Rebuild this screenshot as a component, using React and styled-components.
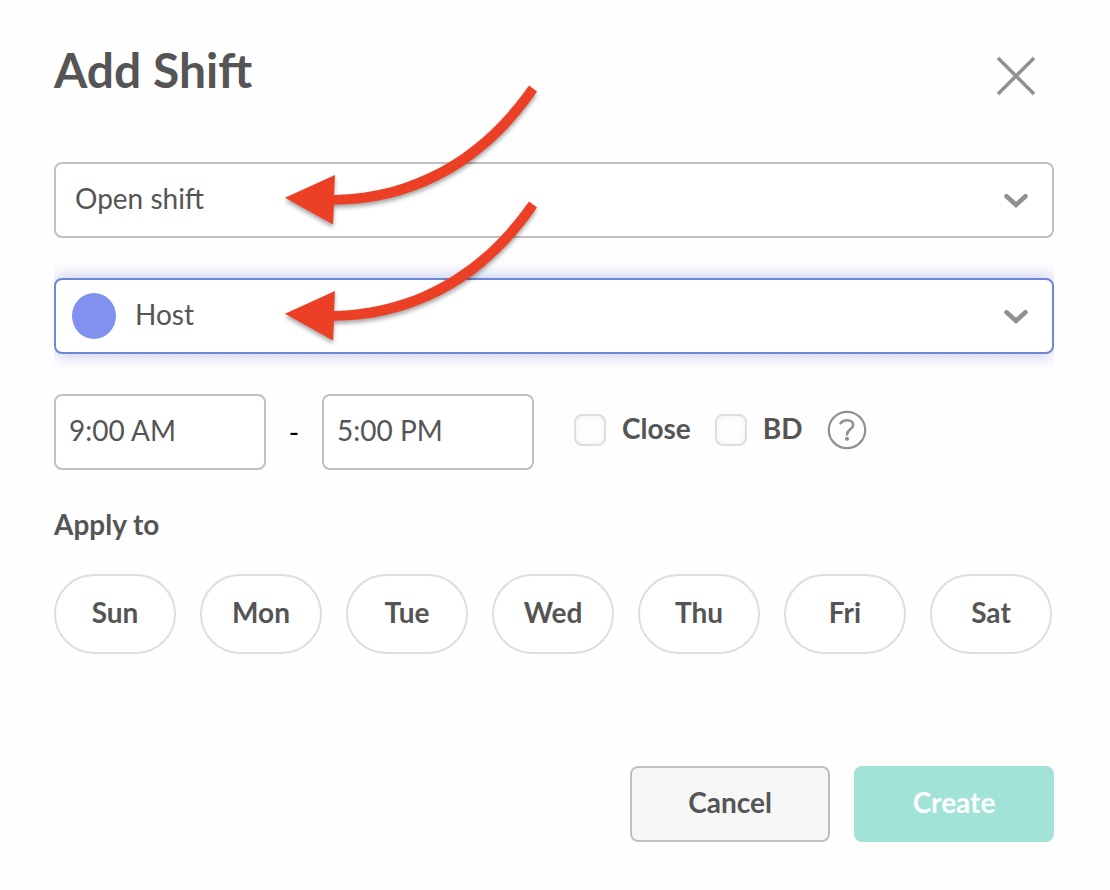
import React, { useState } from 'react';
import styled, { createGlobalStyle, css } from 'styled-components';

const days = ['Sun', 'Mon', 'Tue', 'Wed', 'Thu', 'Fri', 'Sat'];

const Chevron = () => (
    <ChevronIcon viewBox="0 0 24 16" aria-hidden="true">
        <path d="M2.5 4.2 L12 12.8 L21.5 4.2" />
    </ChevronIcon>
);

const Arrow = () => (
    <ArrowIcon viewBox="0 0 270 160" aria-hidden="true">
        <path
            d="M61 111 C150 109 214 62 256 1.5 L264 7.5 C220 72 152 120.5 61 120.7 L60 140.5 L12 113.7 L62 91 Z"
            fill="#eb4026"
        />
    </ArrowIcon>
);

const App = () => {
    const [selectedDays, setSelectedDays] = useState([]);

    const toggleDay = (day) => {
        setSelectedDays((current) =>
            current.includes(day) ? current.filter((d) => d !== day) : [...current, day]
        );
    };

    return (
        <>
            <GlobalStyle />
            <Dialog role="dialog" aria-labelledby="dialog-title">
                <Header>
                    <Title id="dialog-title">Add Shift</Title>
                    <CloseButton type="button" aria-label="Close dialog">
                        <svg width="40" height="40" viewBox="0 0 40 40">
                            <path d="M2 2 L38 38 M38 2 L2 38" stroke="#919191" strokeWidth="3.4" />
                        </svg>
                    </CloseButton>
                </Header>

                <Form onSubmit={(e) => e.preventDefault()}>
                    <Field>
                        <Select aria-label="Employee" defaultValue="open">
                            <option value="open">Open shift</option>
                        </Select>
                        <Chevron />
                        <Arrow />
                    </Field>

                    <Field>
                        <Select aria-label="Role" defaultValue="host" $active $withDot>
                            <option value="host">Host</option>
                        </Select>
                        <RoleDot />
                        <Chevron />
                        <Arrow />
                    </Field>

                    <TimeRow>
                        <TimeInput aria-label="Start time" defaultValue="9:00 AM" />
                        <Dash>-</Dash>
                        <TimeInput aria-label="End time" defaultValue="5:00 PM" />
                        <Options>
                            <CheckLabel>
                                <Checkbox type="checkbox" />
                                <span>Close</span>
                            </CheckLabel>
                            <CheckLabel>
                                <Checkbox type="checkbox" />
                                <span>BD</span>
                            </CheckLabel>
                            <HelpButton type="button" aria-label="Help">
                                <svg width="40" height="40" viewBox="0 0 40 40" fill="none" stroke="#919191">
                                    <circle cx="20" cy="20" r="18.2" strokeWidth="2.2" />
                                    <path
                                        d="M13.6 13.2 C15.4 11.2 17.6 10.3 20.2 10.3 C23.8 10.3 26.2 12.2 26.2 15 C26.2 19.2 20 19.3 20 24.4"
                                        strokeWidth="2.6"
                                        strokeLinecap="round"
                                    />
                                    <circle cx="20" cy="28.8" r="2.1" fill="#919191" stroke="none" />
                                </svg>
                            </HelpButton>
                        </Options>
                    </TimeRow>

                    <Days>
                        <Legend>Apply to</Legend>
                        <DayList>
                            {days.map((day) => (
                                <DayButton
                                    key={day}
                                    type="button"
                                    aria-pressed={selectedDays.includes(day)}
                                    $selected={selectedDays.includes(day)}
                                    onClick={() => toggleDay(day)}
                                >
                                    {day}
                                </DayButton>
                            ))}
                        </DayList>
                    </Days>

                    <Footer>
                        <Button type="button">Cancel</Button>
                        <Button type="submit" $primary>Create</Button>
                    </Footer>
                </Form>
            </Dialog>
        </>
    );
};

const GlobalStyle = createGlobalStyle`
  * {
    box-sizing: border-box;
  }

  body {
    margin: 0;
    background: #fefefe;
    color: #555;
    font-family: Lato, 'Open Sans', sans-serif;
    font-size: 28px;
    line-height: 32px;
  }

  button, input, select {
    margin: 0;
    font: inherit;
    color: inherit;
  }

  button {
    cursor: pointer;
  }
`;

const controlBox = css`
  height: 76px;
  border: 2px solid #c0c0c0;
  border-radius: 8px;
  background: #fff;
`;

const Dialog = styled.main`
  padding: 42px 56px 48px 54px;
`;

const Header = styled.header`
  display: flex;
  align-items: flex-end;
  justify-content: space-between;
  padding-right: 18px;
  margin-bottom: 64px;
`;

const Title = styled.h1`
  margin: 0;
  font-size: 48px;
  line-height: 56px;
  font-weight: 700;
`;

const CloseButton = styled.button`
  display: flex;
  align-items: center;
  height: 44px;
  padding: 0;
  border: 0;
  background: none;
`;

const Form = styled.form`
  display: flex;
  flex-direction: column;
  gap: 40px;
`;

const Field = styled.div`
  position: relative;
  display: grid;
  align-items: center;

  > * {
    grid-area: 1 / 1;
  }
`;

const Select = styled.select`
  ${controlBox}
  width: 100%;
  appearance: none;
  outline: none;
  padding: 0 64px 4px ${props => (props.$withDot ? '79px' : '19px')};

  ${props => props.$active && css`
    border-color: #6f86d6;
    box-shadow: 0 0 18px rgba(80, 100, 210, 0.4);
    clip-path: inset(-24px 0);
  `}
`;

const RoleDot = styled.span`
  z-index: 1;
  width: 44px;
  height: 46px;
  margin-left: 18px;
  border-radius: 50%;
  background: #8091f0;
  pointer-events: none;
`;

const ChevronIcon = styled.svg`
  z-index: 1;
  justify-self: end;
  width: 24px;
  height: 16px;
  margin-right: 26px;
  fill: none;
  stroke: #919191;
  stroke-width: 4.6;
  stroke-linecap: round;
  pointer-events: none;
`;

/* Annotation lying over the field and the space above it */
const ArrowIcon = styled.svg`
  position: absolute;
  left: 219px;
  bottom: -6px;
  z-index: 2;
  width: 270px;
  height: 160px;
  pointer-events: none;
  filter: drop-shadow(0 3px 2px rgba(0, 0, 0, 0.35));
`;

const TimeRow = styled.div`
  display: flex;
  align-items: center;
`;

const TimeInput = styled.input`
  ${controlBox}
  width: 212px;
  padding: 0 13px 4px;
`;

const Dash = styled.span`
  width: 56px;
  color: #000;
  text-align: center;
`;

const Options = styled.div`
  display: flex;
  align-items: center;
  gap: 24px;
  margin-left: 40px;
  padding-bottom: 4px;
`;

const CheckLabel = styled.label`
  display: flex;
  align-items: center;
  gap: 16px;
  font-weight: 700;

  span {
    padding-bottom: 4px;
  }
`;

const Checkbox = styled.input`
  appearance: none;
  width: 32px;
  height: 32px;
  border: 2px solid #dedede;
  border-radius: 8px;
  background: #fefefe;
  box-shadow: inset 0 0 6px rgba(0, 0, 0, 0.06);

  &:checked {
    background: #6f86d6;
  }
`;

const HelpButton = styled.button`
  display: flex;
  padding: 0;
  border: 0;
  background: none;
`;

const Days = styled.section`
  display: flex;
  flex-direction: column;
  gap: 36px;
`;

const Legend = styled.h2`
  margin: 0;
  font-size: 28px;
  line-height: 28px;
  font-weight: 700;
`;

const DayList = styled.div`
  display: grid;
  grid-template-columns: repeat(7, 1fr);
  gap: 24px;
  padding-right: 2px;
`;

const DayButton = styled.button`
  height: 80px;
  padding: 0 0 4px;
  border: 2px solid #dedede;
  border-radius: 40px;
  background: ${props => (props.$selected ? '#e8ebfb' : '#fff')};
  font-weight: 700;
`;

const Footer = styled.footer`
  display: flex;
  justify-content: flex-end;
  gap: 24px;
  margin-top: 72px;
`;

const Button = styled.button`
  ${controlBox}
  width: 200px;
  padding: 0 0 4px;
  background: #f7f7f7;
  font-weight: 700;

  ${props => props.$primary && css`
    border-color: #a1e3d6;
    background: #a1e3d6;
    color: #fff;
  `}
`;

export default App;
